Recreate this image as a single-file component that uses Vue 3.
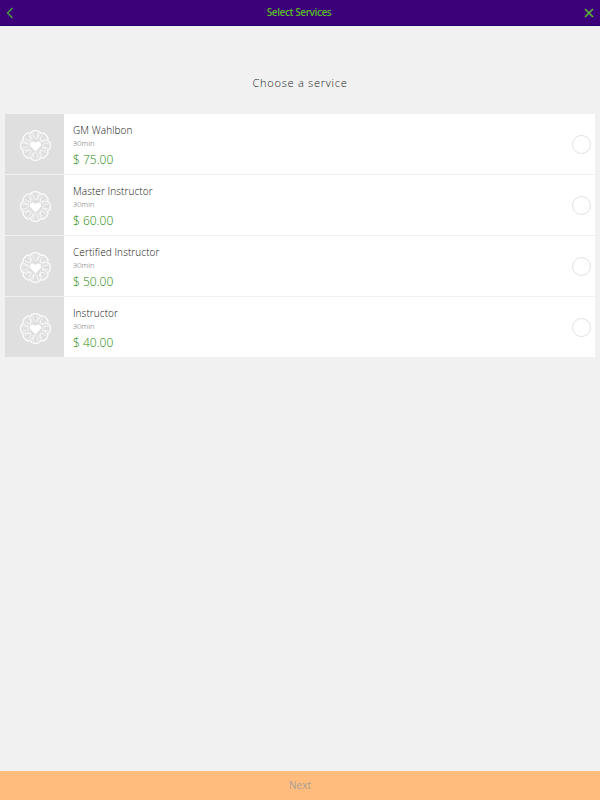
<template>
  <div class="page">
    <header class="topbar">
      <button class="bar-btn" aria-label="Back">
        <svg width="8" height="12" viewBox="0 0 8 12"><path d="M6.5 1 1.5 6l5 5" fill="none" stroke="#4caf3a" stroke-width="1.2" /></svg>
      </button>
      <h1 class="title">Select Services</h1>
      <button class="bar-btn" aria-label="Close">
        <svg width="10" height="10" viewBox="0 0 10 10"><path d="M1 1l8 8M9 1l-8 8" fill="none" stroke="#5cb338" stroke-width="1.7" /></svg>
      </button>
    </header>

    <main class="content">
      <p class="heading">Choose a service</p>
      <ul class="services">
        <li v-for="service in services" :key="service.name" class="service">
          <div class="thumb">
            <svg width="31" height="31" viewBox="0 0 30 30">
              <g fill="none" stroke="#fff" stroke-opacity=".9" stroke-width="1.2">
                <g v-for="angle in petals" :key="angle" :transform="`rotate(${angle} 15 15)`">
                  <path d="M10.3 3.6C10.6-.4 19.4-.4 19.7 3.6" />
                  <path d="M15 8.6C13.2 7 12.4 4.8 12.8 2.6M15 8.6C16.8 7 17.6 4.8 17.2 2.6" stroke-width=".8" />
                  <path d="M10.3 3.6C10.2 5.6 10.8 7.6 12 9" stroke-width=".8" />
                </g>
              </g>
              <path d="M15 20.8 10.4 16c-1.8-1.9-.5-4.9 1.9-4.9 1.2 0 2.1.7 2.7 1.7.6-1 1.5-1.7 2.7-1.7 2.4 0 3.7 3 1.9 4.9Z" fill="#fff" />
            </svg>
          </div>
          <div class="info">
            <div class="name">{{ service.name }}</div>
            <div class="duration">{{ service.duration }}</div>
            <div class="price">{{ service.price }}</div>
          </div>
          <span class="radio"></span>
        </li>
      </ul>
    </main>

    <footer class="next">Next</footer>
  </div>
</template>

<script setup>
const services = [
  { name: 'GM Wahlbon', duration: '30min', price: '$ 75.00' },
  { name: 'Master Instructor', duration: '30min', price: '$ 60.00' },
  { name: 'Certified Instructor', duration: '30min', price: '$ 50.00' },
  { name: 'Instructor', duration: '30min', price: '$ 40.00' }
]

const petals = [0, 45, 90, 135, 180, 225, 270, 315]
</script>

<style>
body {
  margin: 0;
}
</style>

<style scoped>
.page {
  display: flex;
  flex-direction: column;
  height: 800px;
  background: #f1f1f1;
  font-family: 'Open Sans', sans-serif;
}

.topbar {
  display: flex;
  align-items: center;
  justify-content: space-between;
  height: 25px;
  padding: 0 6px;
  background: #3c0078;
  border-bottom: 1px solid #24006b;
}
.bar-btn {
  display: flex;
  align-items: center;
  padding: 0;
  border: 0;
  background: none;
}
.title {
  margin: 0;
  font-size: 10px;
  font-weight: 600;
  line-height: 25px;
  letter-spacing: -0.4px;
  color: #5abb2a;
}

.content {
  flex: 1;
  padding: 0 5px;
}
.heading {
  margin: 0;
  padding-top: 49px;
  height: 39px;
  line-height: 16px;
  font-size: 11px;
  font-weight: 300;
  letter-spacing: 0.75px;
  text-align: center;
  color: #222;
}
.services {
  display: flex;
  flex-direction: column;
  gap: 1px;
  margin: 0;
  padding: 0;
  list-style: none;
}
.service {
  display: flex;
  align-items: center;
  height: 60px;
  background: #fff;
}
.thumb {
  display: flex;
  align-items: center;
  justify-content: center;
  flex: none;
  box-sizing: border-box;
  width: 59px;
  height: 100%;
  padding: 2px 0 0 1px;
  background: #dfdfdf;
}
.info {
  flex: 1;
  padding: 2px 0 0 9px;
}
.name {
  font-size: 10px;
  font-weight: 300;
  line-height: 14px;
  letter-spacing: 0.1px;
  color: #111;
}
.duration {
  font-size: 7.5px;
  font-weight: 300;
  line-height: 12px;
  color: #666;
}
.price {
  margin-top: 2px;
  font-size: 12px;
  font-weight: 300;
  line-height: 17px;
  color: #1c8808;
}
.radio {
  box-sizing: border-box;
  width: 19px;
  height: 19px;
  margin-right: 4px;
  border: 1px solid #e2e2e2;
  border-radius: 50%;
}

.next {
  height: 29px;
  line-height: 29px;
  font-size: 10px;
  text-align: center;
  color: #a5a19b;
  background: #ffbc7c;
}
</style>
